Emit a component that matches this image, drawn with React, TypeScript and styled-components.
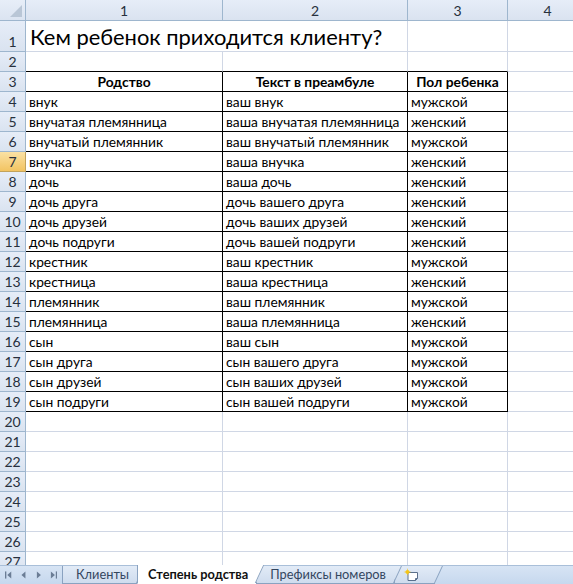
import React from "react";
import styled, { createGlobalStyle, css } from "styled-components";

const GlobalStyle = createGlobalStyle`
  html, body { margin: 0; padding: 0; background: #fff; overflow: hidden; }
  body { font-family: Lato, "Open Sans", "Liberation Sans", sans-serif; }
`;

const GRID = "#d0d7e5";
const HEAD_BORDER = "#9eb6ce";

const Window = styled.div`
  width: 573px;
  height: 584px;
  display: flex;
  flex-direction: column;
  overflow: hidden;
`;

const Sheet = styled.div`
  flex: 1;
  min-height: 0;
  overflow: hidden;
  display: grid;
  grid-template-columns: 26px 197px 185px 100px 80px;
  grid-template-rows: 21px 31px repeat(30, 20px);
`;

const Corner = styled.div`
  position: relative;
  box-sizing: border-box;
  background: linear-gradient(#e7eef8, #dbe4f1);
  border-right: 1px solid ${HEAD_BORDER};
  border-bottom: 1px solid ${HEAD_BORDER};
  &::after {
    content: "";
    position: absolute;
    right: 3px;
    bottom: 3px;
    width: 0;
    height: 0;
    border-left: 12px solid transparent;
    border-bottom: 12px solid #b9c6d6;
  }
`;

const ColHeader = styled.div`
  box-sizing: border-box;
  background: linear-gradient(#e6edf8, #dae3f0);
  border-right: 1px solid ${HEAD_BORDER};
  border-bottom: 1px solid ${HEAD_BORDER};
  display: flex;
  align-items: center;
  justify-content: center;
  font-size: 14px;
  color: #27303d;
`;

const RowHeader = styled.div<{ $active?: boolean }>`
  box-sizing: border-box;
  border-right: 1px solid ${HEAD_BORDER};
  border-bottom: 1px solid ${HEAD_BORDER};
  display: flex;
  align-items: flex-end;
  justify-content: center;
  padding-bottom: 1px;
  font-size: 14px;
  line-height: 17px;
  color: #27303d;
  background: linear-gradient(#e6edf8, #dae3f0);
  ${(p) =>
    p.$active &&
    css`
      background: linear-gradient(#fbe1a4, #f2c462);
      border-bottom-color: #c2a35c;
      border-right-color: #c2a35c;
    `}
`;

const Cell = styled.div<{ $right?: boolean; $bottom?: boolean; $bold?: boolean; $center?: boolean; $span?: number }>`
  box-sizing: border-box;
  min-width: 0;
  overflow: visible;
  white-space: nowrap;
  border-right: 1px solid ${(p) => (p.$right ? "#000" : GRID)};
  border-bottom: 1px solid ${(p) => (p.$bottom ? "#000" : GRID)};
  display: flex;
  align-items: flex-end;
  justify-content: ${(p) => (p.$center ? "center" : "flex-start")};
  padding: 0 3px 1px;
  font-size: 13.8px;
  line-height: 17px;
  font-weight: ${(p) => (p.$bold ? 700 : 400)};
  color: #000;
  ${(p) => p.$span && css`grid-column: span ${p.$span};`}
`;

const Title = styled(Cell)`
  font-size: 21.9px;
  line-height: 27px;
  padding: 0 4px 1px;
`;

const TabBar = styled.div`
  flex: 0 0 19px;
  display: flex;
  align-items: stretch;
  background: linear-gradient(#d7e4f4, #c6d8ee);
  border-top: 1px solid #a9bfd9;
  box-sizing: border-box;
  font-family: Lato, "Open Sans", "Liberation Sans", sans-serif;
`;

const Nav = styled.div`
  display: flex;
  align-items: center;
  gap: 9px;
  padding: 0 0 0 5px;
  width: 57px;
  box-sizing: border-box;
  color: #6b7d95;
`;

const Tabs = styled.div`
  display: flex;
  align-items: stretch;
  padding-left: 5px;
`;

const Tab = styled.div<{ $active?: boolean }>`
  position: relative;
  display: flex;
  align-items: center;
  padding: 0 8px 1px 13px;
  font-size: 12.8px;
  color: #34465f;
  background: linear-gradient(#e2ebf7, #cfdcee);
  border-left: 1px solid #8aa2c0;
  border-bottom: 1px solid #8aa2c0;
  ${(p) =>
    p.$active &&
    css`
      background: #fff;
      color: #111;
      font-weight: 700;
      border-bottom-color: #fff;
      margin-top: -1px;
      padding-left: 10px;
      z-index: 2;
    `}
  &::after {
    content: "";
    position: absolute;
    top: 0;
    right: -4px;
    width: 8px;
    height: 100%;
    border-right: 1px solid #8aa2c0;
    transform: skewX(-25deg);
    background: inherit;
    z-index: 1;
  }
`;

const NewTab = styled(Tab)`
  padding: 0 14px 0 8px;
`;

type Row = [string, string, string];
const rows: Row[] = [
  ["внук", "ваш внук", "мужской"],
  ["внучатая племянница", "ваша внучатая племянница", "женский"],
  ["внучатый племянник", "ваш внучатый племянник", "мужской"],
  ["внучка", "ваша внучка", "женский"],
  ["дочь", "ваша дочь", "женский"],
  ["дочь друга", "дочь вашего друга", "женский"],
  ["дочь друзей", "дочь ваших друзей", "женский"],
  ["дочь подруги", "дочь вашей подруги", "женский"],
  ["крестник", "ваш крестник", "мужской"],
  ["крестница", "ваша крестница", "женский"],
  ["племянник", "ваш племянник", "мужской"],
  ["племянница", "ваша племянница", "женский"],
  ["сын", "ваш сын", "мужской"],
  ["сын друга", "сын вашего друга", "мужской"],
  ["сын друзей", "сын ваших друзей", "мужской"],
  ["сын подруги", "сын вашей подруги", "мужской"],
];

const First = () => (
  <svg width="8" height="8" viewBox="0 0 8 8"><rect x="0" y="0" width="1.5" height="8" fill="currentColor" /><path d="M7 0 L2.5 4 L7 8 Z" fill="currentColor" /></svg>
);
const Prev = () => (
  <svg width="6" height="8" viewBox="0 0 6 8"><path d="M5 0 L0.5 4 L5 8 Z" fill="currentColor" /></svg>
);
const Next = () => (
  <svg width="6" height="8" viewBox="0 0 6 8"><path d="M1 0 L5.5 4 L1 8 Z" fill="currentColor" /></svg>
);
const Last = () => (
  <svg width="8" height="8" viewBox="0 0 8 8"><path d="M1 0 L5.5 4 L1 8 Z" fill="currentColor" /><rect x="6.5" y="0" width="1.5" height="8" fill="currentColor" /></svg>
);
const InsertSheetIcon = () => (
  <svg width="18" height="14" viewBox="0 0 18 14">
    <path d="M5 4.5 H14.5 V10.5 L12.5 12.5 H5 Z" fill="#fff" stroke="#5a6f8c" strokeWidth="1" />
    <path d="M12.5 12.5 V10.5 H14.5" fill="none" stroke="#5a6f8c" strokeWidth="1" />
    <g fill="#f5c518">
      <circle cx="4.5" cy="4" r="2" />
      <path d="M4.5 0 L5 2.5 L4 2.5 Z M0.5 4 L3 3.5 L3 4.5 Z M8.5 4 L6 3.5 L6 4.5 Z M4.5 8 L4 5.5 L5 5.5 Z" />
    </g>
  </svg>
);

export default function App() {
  const extraRows = Array.from({ length: 12 }, (_, i) => 20 + i);
  return (
    <Window>
      <GlobalStyle />
      <Sheet>
        <Corner />
        <ColHeader>1</ColHeader>
        <ColHeader>2</ColHeader>
        <ColHeader>3</ColHeader>
        <ColHeader>4</ColHeader>

        <RowHeader>1</RowHeader>
        <Title $span={2}>Кем ребенок приходится клиенту?</Title>
        <Cell />
        <Cell />

        <RowHeader>2</RowHeader>
        <Cell $bottom />
        <Cell $bottom />
        <Cell $bottom />
        <Cell />

        <RowHeader>3</RowHeader>
        <Cell $right $bottom $bold $center>Родство</Cell>
        <Cell $right $bottom $bold $center>Текст в преамбуле</Cell>
        <Cell $right $bottom $bold $center>Пол ребенка</Cell>
        <Cell />

        {rows.map((r, i) => (
          <React.Fragment key={i}>
            <RowHeader $active={i + 4 === 7}>{i + 4}</RowHeader>
            <Cell $right $bottom>{r[0]}</Cell>
            <Cell $right $bottom>{r[1]}</Cell>
            <Cell $right $bottom>{r[2]}</Cell>
            <Cell />
          </React.Fragment>
        ))}

        {extraRows.map((n) => (
          <React.Fragment key={n}>
            <RowHeader>{n}</RowHeader>
            <Cell />
            <Cell />
            <Cell />
            <Cell />
          </React.Fragment>
        ))}
      </Sheet>
      <TabBar>
        <Nav>
          <First />
          <Prev />
          <Next />
          <Last />
        </Nav>
        <Tabs>
          <Tab>Клиенты</Tab>
          <Tab $active>Степень родства</Tab>
          <Tab>Префиксы номеров</Tab>
          <NewTab>
            <InsertSheetIcon />
          </NewTab>
        </Tabs>
      </TabBar>
    </Window>
  );
}
